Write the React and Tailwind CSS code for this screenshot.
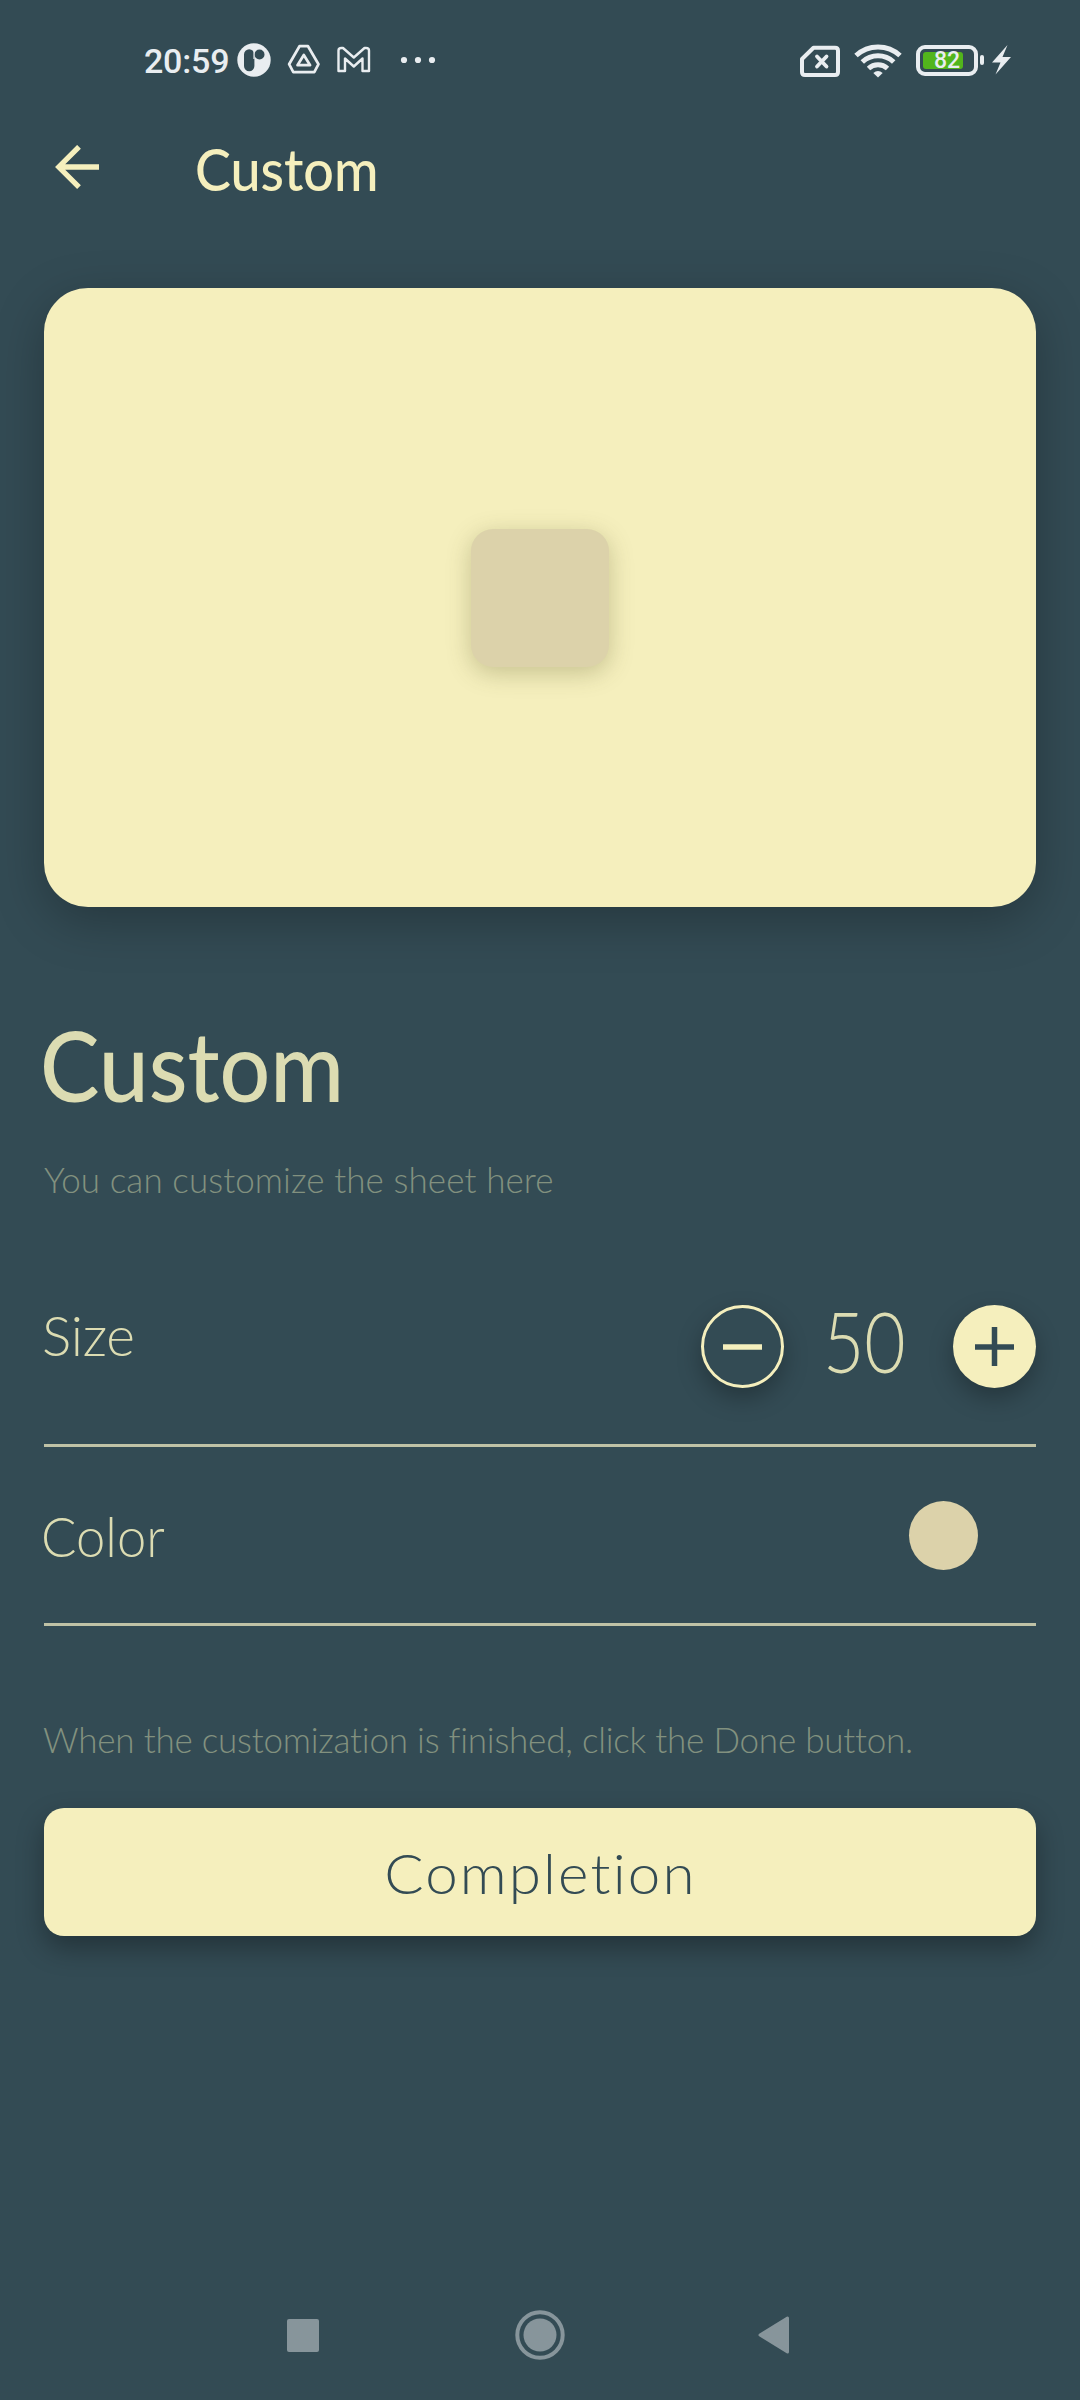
const lato = "font-['Lato',sans-serif] whitespace-nowrap [font-variant-ligatures:none]";

function StatusBar() {
  return (
    <div className="flex h-[120px] items-center justify-between pl-[144px] pr-[68px] font-['Roboto',sans-serif] text-[#e9edf0]">
      <div className="flex items-center">
        <span className="w-[93px] pt-[2px] text-[34px] leading-[40px] font-medium tracking-[-0.2px]">20:59</span>
        <svg width="204" height="40" viewBox="237 40 204 40" fill="none">
          <circle cx="254" cy="60" r="16.7" fill="#e9edf0" />
          <path d="M244 54.500a5.200 5.200 0 0 1 10.400 0V66a5.200 5.200 0 0 1-10.400 0z" fill="#334b54" />
          <circle cx="259.500" cy="54.500" r="5" fill="#334b54" />
          <path d="M254 50v9" stroke="#e9edf0" strokeWidth="1.200" />
          <path d="M299.500 46.200h8.500l10.500 18-4.200 8h-21l-4.200-8z" stroke="#e9edf0" strokeWidth="2.700" strokeLinejoin="round" />
          <path d="M303.800 55l6.300 10.200h-12.600z" stroke="#e9edf0" strokeWidth="2.700" strokeLinejoin="round" />
          <path d="M338.500 71V50.500q0-2.500 3-2.500h1.500l10.800 9.500L364.500 48h1.500q3 0 3 2.500V71h-6.500V58.500l-8.700 8-8.800-8V71z" stroke="#e9edf0" strokeWidth="2.400" strokeLinejoin="round" />
          <g fill="#e9edf0">
            <circle cx="404" cy="60" r="3.100" />
            <circle cx="418" cy="60" r="3.100" />
            <circle cx="432" cy="60" r="3.100" />
          </g>
        </svg>
      </div>
      <div className="flex items-center">
        <svg width="104" height="40" viewBox="799 40 104 40" fill="none" stroke="#e9edf0">
          <path d="M813.500 47.800H835q3 0 3 3V72q0 3-3 3h-30q-3 0-3-3V59z" strokeWidth="4" strokeLinejoin="round" />
          <path d="M817 56.500l9.500 10M826.500 56.500l-9.500 10" strokeWidth="3.800" strokeLinecap="round" />
          <path d="M856 55.500a32.500 32.500 0 0 1 44 0M862.300 62a23 23 0 0 1 31.400 0M868.500 68.500a14 14 0 0 1 19 0" strokeWidth="5" />
          <path d="M873.300 73q4.700-4 9.400 0L878 77.500z" fill="#e9edf0" stroke="none" />
        </svg>
        <div className="ml-[13px] flex h-[31px] w-[62px] items-center rounded-[9px] border-4 border-[#e9edf0] pl-[3px]">
          <div className="flex h-[17px] w-[40px] items-center rounded-[3px] bg-[#52b51c]">
            <span className="ml-[11px] pt-px text-[23px] leading-[17px] font-medium">82</span>
          </div>
        </div>
        <div className="ml-[2px] h-[10px] w-[4px] rounded-[2px] bg-[#e9edf0]" />
        <svg className="ml-[8px]" width="20" height="32" viewBox="0 0 20 32">
          <path d="M15.500 1L0 18.500h8.500L3.500 30.500 19 13h-8.500z" fill="#e9edf0" />
        </svg>
      </div>
    </div>
  );
}

function TopBar() {
  return (
    <div className="flex h-[96px] items-center pl-[55px]">
      <svg width="45" height="46" viewBox="55 145 45 46" fill="none" stroke="#f5efbd" strokeWidth="5.300">
        <path d="M99 167H59M79 146.800L58.800 167 79 187.200" />
      </svg>
      <h1 className={`${lato} ml-[95px] origin-left scale-x-[0.945] pt-[2px] text-[57px] leading-[94px] font-medium text-[#f5efbd]`}>Custom</h1>
    </div>
  );
}

function RoundButton({ filled, children }) {
  const look = filled ? "bg-[#f5efbd] text-[#334b54]" : "border-[3px] border-[#f5efbd] bg-[#334b54] text-[#f5efbd]";
  return (
    <button className={`flex size-[83px] items-center justify-center rounded-full shadow-[0_10px_24px_rgba(0,0,0,0.28)] ${look}`}>
      <svg width="39" height="39" viewBox="0 0 39 39" stroke="currentColor" strokeWidth="5.500">
        {children}
      </svg>
    </button>
  );
}

export default function App() {
  return (
    <div className="flex h-[2400px] w-[1080px] flex-col overflow-hidden bg-[#334b54]">
      <StatusBar />
      <TopBar />
      <main className="flex flex-col px-[44px] pt-[72px]">
        <div className="flex h-[619px] items-center justify-center rounded-[44px] bg-[#f5efbd] pt-px shadow-[0_14px_50px_rgba(0,0,0,0.26)]">
          <div className="size-[138px] rounded-[22px] bg-[#dcd2aa] shadow-[0_6px_24px_rgba(80,80,30,0.28)]" />
        </div>
        <h2 className={`${lato} mt-[110px] -ml-[4px] origin-left scale-x-[0.93] text-[96px] leading-[96px] font-medium text-[#dcdcb2]`}>Custom</h2>
        <p className={`${lato} mt-[46px] text-[35px] leading-[40px] font-light tracking-[0.09px] text-[#82917f]`}>You can customize the sheet here</p>

        <div className="mt-[106px] flex h-[142px] items-start border-b-[3px] border-[#bfc2a6]">
          <span className={`${lato} -ml-[2px] flex-1 text-[55px] leading-[61px] font-light tracking-[-0.3px] text-[#dcdcb2]`}>Size</span>
          <RoundButton>
            <path d="M0 20H39" />
          </RoundButton>
          <span className={`${lato} w-[169px] pr-[9px] text-center text-[85px] leading-[70px] font-light text-[#dcdcb2]`}>
            <span className="inline-block scale-x-[0.84]">50</span>
          </span>
          <RoundButton filled>
            <path d="M0 20H39M19.500 0V39" />
          </RoundButton>
        </div>

        <div className="flex h-[179px] items-center justify-between border-b-[3px] border-[#bfc2a6] pr-[58px]">
          <span className={`${lato} -ml-[3px] origin-left scale-x-[0.955] pt-[2px] text-[55px] leading-[69px] font-light text-[#dcdcb2]`}>Color</span>
          <span className="size-[69px] rounded-full bg-[#dcd2aa]" />
        </div>

        <p className={`${lato} mt-[93px] -ml-px text-[35px] leading-[40px] font-light tracking-[-0.22px] text-[#82917f]`}>
          When the customization is finished, click the Done button.
        </p>
        <button className={`${lato} mt-[49px] h-[128px] rounded-[20px] bg-[#f5efbd] pt-[2px] text-[55px] leading-[126px] font-light tracking-[2px] text-[#334b54] shadow-[0_12px_28px_rgba(0,0,0,0.32)]`}>
          <span className="inline-block scale-x-[1.06]">Completion</span>
        </button>
      </main>
      <nav className="mt-auto flex h-[128px] items-center justify-between pr-[290px] pb-[2px] pl-[287px]">
        <span className="h-[33px] w-[32px] rounded-[2px] bg-[#87959b]" />
        <svg className="ml-[4px]" width="50" height="50" viewBox="0 0 50 50">
          <circle cx="25" cy="25" r="22.700" fill="none" stroke="#87959b" strokeWidth="4" />
          <circle cx="25" cy="25" r="16.500" fill="#87959b" />
        </svg>
        <svg width="33" height="38" viewBox="0 0 33 38">
          <path d="M3 19L30.500 2V36z" fill="#87959b" stroke="#87959b" strokeWidth="3" strokeLinejoin="round" />
        </svg>
      </nav>
    </div>
  );
}
